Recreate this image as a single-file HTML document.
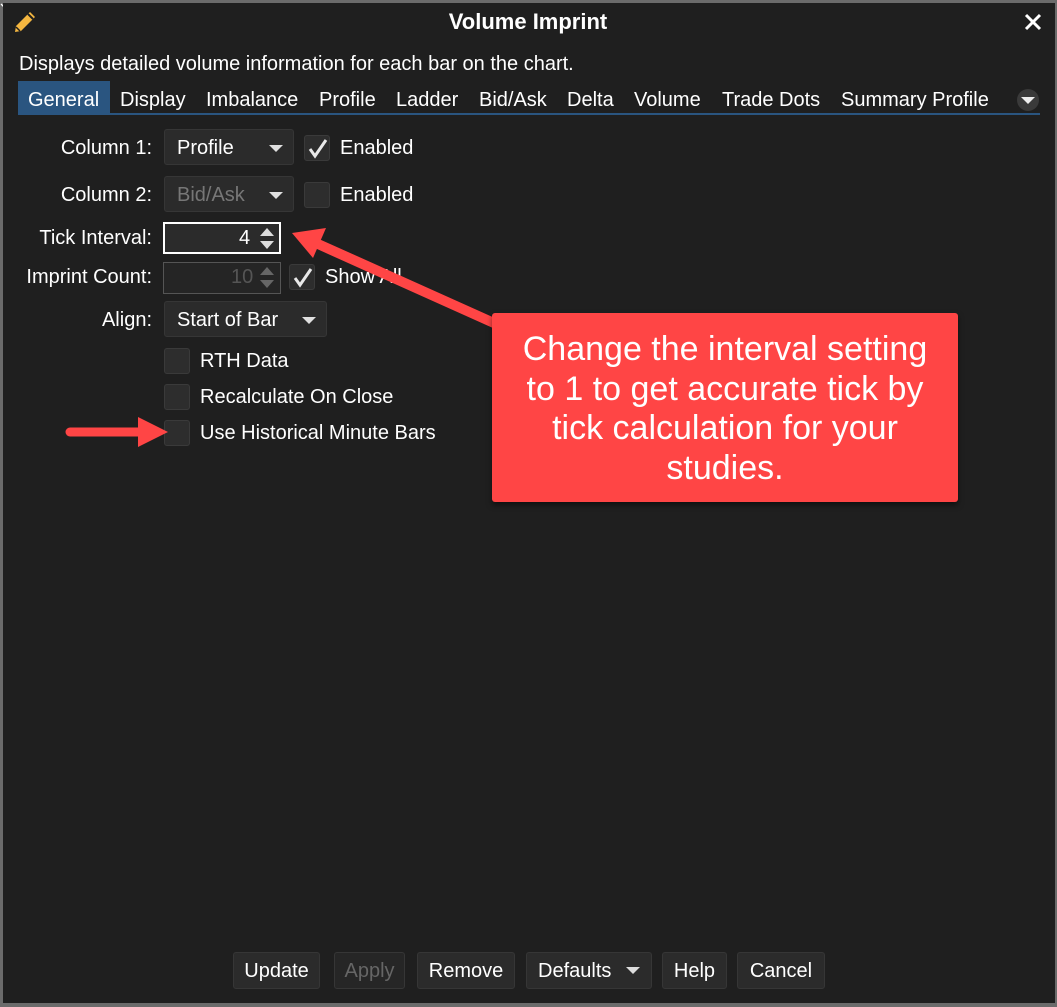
<!DOCTYPE html>
<html><head><meta charset="utf-8"><style>
*{margin:0;padding:0;box-sizing:border-box}
body{width:1057px;height:1007px;background:#6b6b6b;font-family:"Liberation Sans",sans-serif;position:relative;overflow:hidden;color:#fff}
#win{position:absolute;left:3px;top:3px;width:1052px;height:1000px;background:#1f1f1f}
.a{position:absolute;white-space:nowrap}
.lbl{font-size:20px;color:#fff;text-align:right;width:149px;left:0}
.dd{position:absolute;background:#2b2b2b;border:1px solid #363636;border-radius:3px;font-size:20px;padding-left:12px;line-height:37px;height:36px}
.dd:after{content:"";position:absolute;right:10px;top:15px;border-left:7px solid transparent;border-right:7px solid transparent;border-top:7px solid #e0e0e0}
.cb{position:absolute;width:26px;height:26px;background:#2d2d2d;border:1px solid #3a3a3a;border-radius:3px}
.btn{position:absolute;top:949px;height:37px;background:#2b2b2b;border:1px solid #363636;border-radius:3px;font-size:20px;line-height:36px;text-align:center}
.tab{position:absolute;top:86px;font-size:20px}
</style></head><body>
<div style="position:absolute;left:0;top:0;width:8px;height:8px;"><svg width="10" height="10"><path d="M1 1L8 8M8 4V8H4" stroke="#fff" stroke-width="1.3" fill="none"/></svg></div>
<div id="win">
<svg class="a" style="left:8px;top:5px" width="28" height="28" viewBox="0 0 28 28"><path d="M19 4l5 5-14 14-6 1 1-6z" fill="#f5b740"/><path d="M17 6l5 5" stroke="#1f1f1f" stroke-width="2"/><path d="M5 19l4 4" stroke="#1f1f1f" stroke-width="1.5"/></svg>
<div class="a" style="left:0;width:1050px;top:6px;text-align:center;font-size:22px;font-weight:bold">Volume Imprint</div>
<svg class="a" style="left:1021px;top:10px" width="18" height="18"><path d="M2 2L16 16M16 2L2 16" stroke="#fff" stroke-width="3"/></svg>
<div class="a" style="left:16px;top:50px;font-size:20px">Displays detailed volume information for each bar on the chart.</div>
<div class="a" style="left:15px;top:78px;width:92px;height:33px;background:#2a5580"></div>
<div class="a" style="left:15px;top:110px;width:1022px;height:2px;background:#2a5580"></div>
<div class="tab" style="left:25px">General</div>
<div class="tab" style="left:117px">Display</div>
<div class="tab" style="left:203px">Imbalance</div>
<div class="tab" style="left:316px">Profile</div>
<div class="tab" style="left:393px">Ladder</div>
<div class="tab" style="left:476px">Bid/Ask</div>
<div class="tab" style="left:564px">Delta</div>
<div class="tab" style="left:631px">Volume</div>
<div class="tab" style="left:719px">Trade Dots</div>
<div class="tab" style="left:838px">Summary Profile</div>
<div class="a" style="left:1014px;top:86px;width:22px;height:22px;border-radius:50%;background:#3a3a3a"></div>
<div class="a" style="left:1018px;top:94px;border-left:7px solid transparent;border-right:7px solid transparent;border-top:7px solid #eee"></div>

<div class="a lbl" style="top:134px">Column 1:</div>
<div class="dd" style="left:161px;top:126px;width:130px">Profile</div>
<div class="cb" style="left:301px;top:132px"></div>
<svg class="a" style="left:304px;top:134px" width="22" height="22"><path d="M3 12l5 7L19 3" stroke="#e8e8e8" stroke-width="3" fill="none"/></svg>
<div class="a" style="left:337px;top:134px;font-size:20px">Enabled</div>

<div class="a lbl" style="top:181px">Column 2:</div>
<div class="dd" style="left:161px;top:173px;width:130px;color:#777">Bid/Ask</div>
<div class="cb" style="left:301px;top:179px"></div>
<div class="a" style="left:337px;top:181px;font-size:20px">Enabled</div>

<div class="a lbl" style="top:224px">Tick Interval:</div>
<div class="a" style="left:160px;top:219px;width:118px;height:32px;border:2px solid #fff;background:#2b2b2b"></div>
<div class="a" style="left:236px;top:224px;font-size:20px">4</div>
<div class="a" style="left:257px;top:225px;border-left:7px solid transparent;border-right:7px solid transparent;border-bottom:8px solid #ddd"></div>
<div class="a" style="left:257px;top:238px;border-left:7px solid transparent;border-right:7px solid transparent;border-top:8px solid #ddd"></div>

<div class="a lbl" style="top:263px">Imprint Count:</div>
<div class="a" style="left:160px;top:259px;width:118px;height:32px;border:1px solid #555;background:#252525"></div>
<div class="a" style="left:228px;top:263px;font-size:20px;color:#555">10</div>
<div class="a" style="left:257px;top:264px;border-left:7px solid transparent;border-right:7px solid transparent;border-bottom:8px solid #666"></div>
<div class="a" style="left:257px;top:277px;border-left:7px solid transparent;border-right:7px solid transparent;border-top:8px solid #666"></div>
<div class="cb" style="left:286px;top:261px"></div>
<svg class="a" style="left:289px;top:263px" width="22" height="22"><path d="M3 12l5 7L19 3" stroke="#e8e8e8" stroke-width="3" fill="none"/></svg>
<div class="a" style="left:322px;top:263px;font-size:20px">Show All</div>

<div class="a lbl" style="top:306px">Align:</div>
<div class="dd" style="left:161px;top:298px;width:163px">Start of Bar</div>
<div class="cb" style="left:161px;top:345px"></div>
<div class="a" style="left:197px;top:347px;font-size:20px">RTH Data</div>
<div class="cb" style="left:161px;top:381px"></div>
<div class="a" style="left:197px;top:383px;font-size:20px">Recalculate On Close</div>
<div class="cb" style="left:161px;top:417px"></div>
<div class="a" style="left:197px;top:419px;font-size:20px">Use Historical Minute Bars</div>

<div class="btn" style="left:230px;width:87px">Update</div>
<div class="btn" style="left:331px;width:71px;color:#666;background:#262626">Apply</div>
<div class="btn" style="left:414px;width:98px">Remove</div>
<div class="btn" style="left:523px;width:126px;text-align:left;padding-left:11px">Defaults<span style="position:absolute;right:11px;top:14px;border-left:7px solid transparent;border-right:7px solid transparent;border-top:7px solid #ddd"></span></div>
<div class="btn" style="left:659px;width:65px">Help</div>
<div class="btn" style="left:734px;width:88px">Cancel</div>
</div>

<svg class="a" style="left:0;top:0" width="1057" height="1007">
<path d="M318 244L505 328" stroke="#ff4545" stroke-width="10" stroke-linecap="round"/>
<path d="M292 233L326 228L313 258Z" fill="#ff4545"/>
<path d="M70 432L142 432" stroke="#ff4545" stroke-width="9" stroke-linecap="round"/>
<path d="M168 432L138 417L138 447Z" fill="#ff4545"/>
</svg>
<div class="a" style="left:492px;top:313px;width:466px;height:189px;background:#ff4545;border-radius:3px;box-shadow:0 3px 6px rgba(0,0,0,.5);font-size:34px;line-height:39.5px;text-align:center;padding-top:17px;white-space:normal">Change the interval setting<br>to 1 to get accurate tick by<br>tick calculation for your<br>studies.</div>
</body></html>
